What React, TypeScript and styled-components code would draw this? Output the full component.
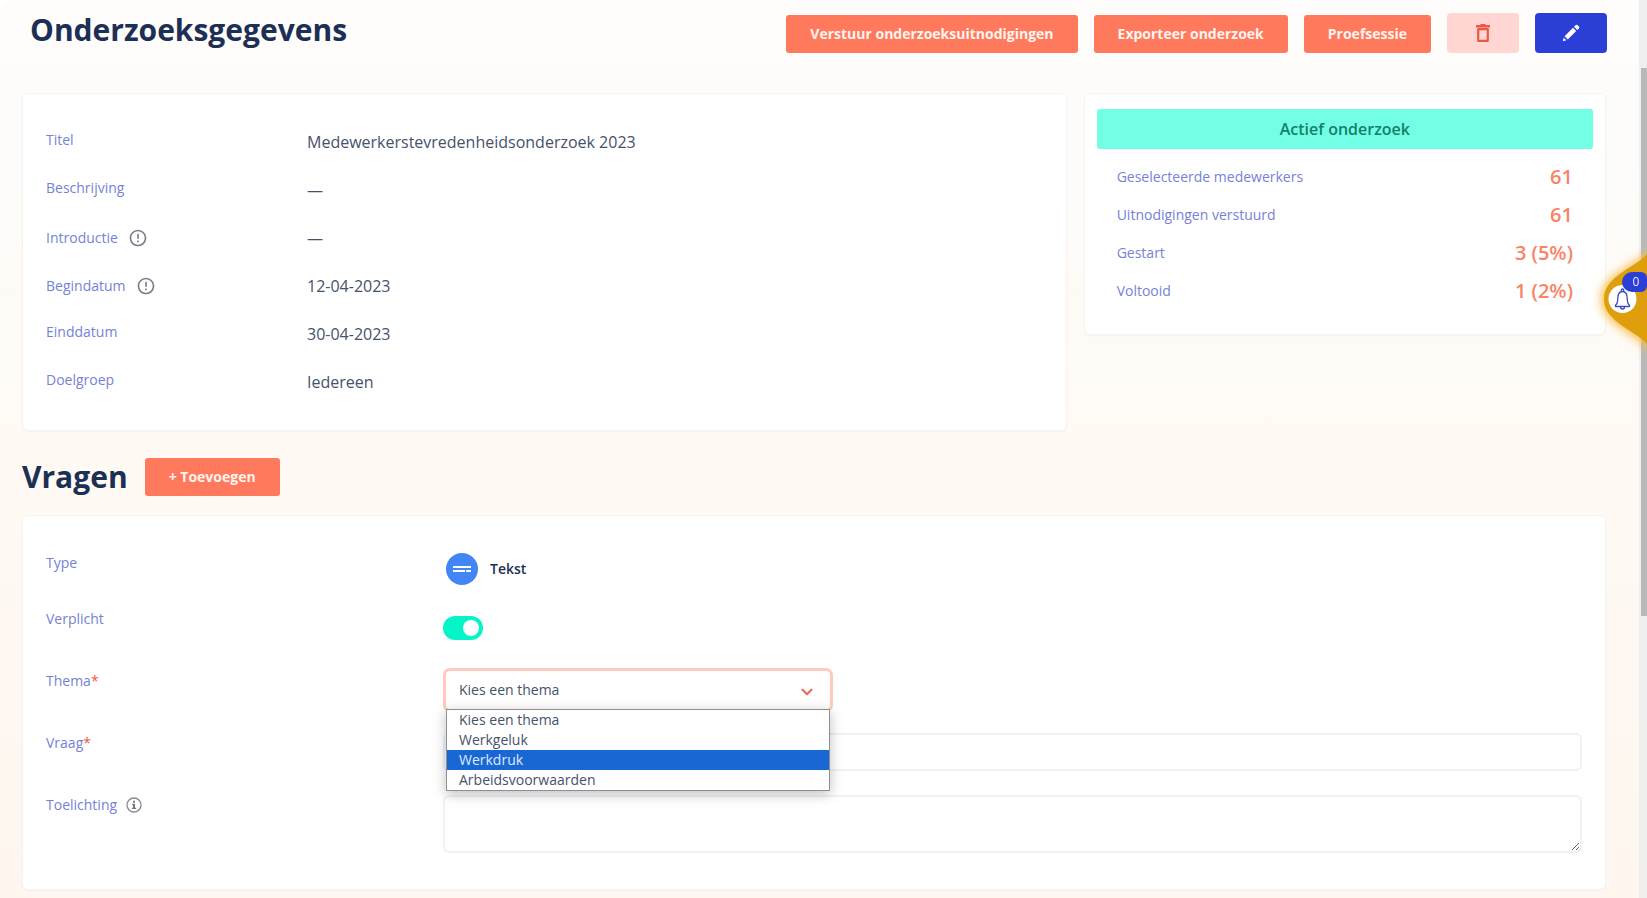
import React, { useState } from 'react';
import styled, { createGlobalStyle } from 'styled-components';
import { RiErrorWarningLine } from 'react-icons/ri';
import { ChevronDown } from 'lucide-react';

const color = {
  heading: '#1c2f54',
  text: '#46526c',
  label: '#7682d6',
  coral: '#ff7a5c',
  figure: '#fa8468',
  blue: '#2b3fd6',
  line: '#eff2f4',
};

const GlobalStyle = createGlobalStyle`
  *, *::before, *::after { box-sizing: border-box; }
  body {
    margin: 0;
    background: #fff;
    color: ${color.text};
    font-family: 'Open Sans', 'Noto Sans', sans-serif;
    font-size: 14px;
    line-height: 20px;
  }
  h1, h2, dl, dd, dt, p, ul { margin: 0; padding: 0; }
  button, input, select, textarea { font: inherit; color: inherit; }
`;

const Page = styled.div`
  min-height: 100vh;
  padding-right: 8px;
  border-top-left-radius: 14px;
  background: linear-gradient(#fdfcfb 0, #fdfcfb 90px, #fffaf4 50%, #fef6ef 100%);
`;

const Header = styled.header`
  display: flex;
  align-items: flex-end;
  justify-content: space-between;
  gap: 16px;
  height: 64px;
  padding: 0 32px 11px 30px;
  border-top-left-radius: 14px;
  background: #fefdfc;
`;

const Heading = styled.h1`
  color: ${color.heading};
  font-size: 30px;
  font-weight: 700;
  line-height: 46px;
`;

const Actions = styled.div`
  display: flex;
  align-items: flex-end;
  gap: 16px;
`;

const Button = styled.button`
  height: 38px;
  padding: 0 24px;
  border: 0;
  border-radius: 3px;
  background: ${color.coral};
  color: #fff3ef;
  font-size: 14px;
  font-weight: 700;
  white-space: nowrap;
  cursor: pointer;
`;

const IconButton = styled.button<{ $danger?: boolean }>`
  display: grid;
  place-items: center;
  width: 72px;
  height: 40px;
  padding: 0;
  border: 0;
  border-radius: 4px;
  background: ${p => (p.$danger ? '#ffd6d1' : color.blue)};
  color: ${p => (p.$danger ? '#ee5744' : '#fff')};
  cursor: pointer;
`;

const Main = styled.main`
  padding: 29px 33px 8px 22px;
`;

const Overview = styled.div`
  display: grid;
  grid-template-columns: 2fr 1fr;
  align-items: start;
  gap: 17px;
`;

const Card = styled.section`
  border: 1px solid #f6f4f3;
  border-radius: 6px;
  background: #fff;
  box-shadow: 0 1px 2px rgba(40, 50, 80, 0.04);
`;

const DetailCard = styled(Card)`
  padding: 36px 23px;
`;

const DetailRow = styled.div`
  display: grid;
  grid-template-columns: 261px 1fr;
  min-height: 24px;
  & + & { margin-top: 24px; }
  dd { font-size: 16px; line-height: 24px; }
`;

const Term = styled.dt`
  display: flex;
  align-items: center;
  align-self: start;
  gap: 10px;
  color: ${color.label};
`;

const TermIcon = styled(RiErrorWarningLine)`
  display: block;
  width: 20px;
  height: 24px;
  color: #7b7f89;
`;

const StatusCard = styled(Card)`
  padding: 15px 12px;
`;

const Status = styled.p`
  border-radius: 3px;
  background: #72ffe5;
  color: #14806c;
  font-size: 16px;
  font-weight: 600;
  line-height: 40px;
  text-align: center;
`;

const Stats = styled.dl`
  padding: 9px 20px;
`;

const Stat = styled.div`
  display: flex;
  justify-content: space-between;
  line-height: 38px;
  dt { color: ${color.label}; }
  dd { color: ${color.figure}; font-size: 20px; font-weight: 600; }
`;

const SectionHead = styled.div`
  display: flex;
  align-items: center;
  gap: 17px;
  margin: 23px 0 15px;
`;

const FormCard = styled(Card)`
  padding: 37px 23px 36px;
`;

const FormRow = styled.div`
  display: grid;
  grid-template-columns: 397px 1fr;
  align-items: start;
  & + & { margin-top: 24px; }
`;

const Label = styled.label`
  display: flex;
  align-items: center;
  color: ${color.label};
`;

const Required = styled.span`
  color: #f4563c;
`;

const TypeValue = styled.div`
  display: flex;
  align-items: center;
  gap: 12px;
  padding-left: 3px;
  color: ${color.heading};
  font-weight: 600;
`;

const ToggleArea = styled.div`
  display: flex;
  align-items: center;
  height: 38px;
`;

const Toggle = styled.input`
  appearance: none;
  display: flex;
  align-items: center;
  width: 40px;
  height: 24px;
  margin: 0;
  padding: 0 4px;
  border-radius: 12px;
  background: #d5d9e0;
  cursor: pointer;
  &::before {
    content: '';
    width: 16px;
    height: 16px;
    border-radius: 50%;
    background: #fff;
  }
  &:checked {
    justify-content: flex-end;
    background: #05f5c8;
  }
`;

const SelectArea = styled.div`
  position: relative;
  width: 384px;
  margin-left: 3px;
`;

const Select = styled.select`
  appearance: none;
  display: block;
  width: 100%;
  height: 38px;
  padding: 0 13px;
  border: 0;
  border-radius: 4px;
  outline: 0;
  background: #fff;
  box-shadow: 0 0 0 3px #ffcabd;
`;

const Chevron = styled(ChevronDown)`
  position: absolute;
  top: 12px;
  right: 14px;
  width: 18px;
  height: 18px;
  color: #ef6a5e;
  stroke-width: 3;
  pointer-events: none;
`;

const Options = styled.ul`
  position: absolute;
  top: 100%;
  left: 0;
  right: 0;
  z-index: 1;
  border: 1px solid #8f8f8f;
  background: #fff;
  box-shadow: 0 3px 12px rgba(0, 0, 0, 0.25);
  list-style: none;
`;

const Option = styled.li<{ $active: boolean }>`
  padding: 0 12px;
  background: ${p => (p.$active ? '#1967d2' : '#fff')};
  color: ${p => (p.$active ? '#dfeaff' : color.text)};
  cursor: default;
`;

const TextInput = styled.input`
  width: 100%;
  height: 38px;
  padding: 0 12px;
  border: 2px solid ${color.line};
  border-radius: 6px;
  background: #fff;
`;

const TextArea = styled.textarea`
  display: block;
  width: 100%;
  height: 58px;
  padding: 8px 12px;
  border: 2px solid ${color.line};
  border-radius: 6px;
  background: #fff;
  resize: vertical;
`;

const Track = styled.div`
  position: fixed;
  top: 0;
  right: 0;
  bottom: 0;
  width: 8px;
  padding: 68px 0 0 2px;
  background: #efefef;
`;

const Thumb = styled.div`
  height: 66%;
  background: #b9b9b9;
`;

const Notifications = styled.button`
  position: fixed;
  top: 240px;
  right: 0;
  width: 60px;
  height: 120px;
  padding: 0;
  border: 0;
  background: none;
  cursor: pointer;
  svg { display: block; overflow: visible; }
`;

const Count = styled.span`
  position: absolute;
  top: 32px;
  right: 0;
  width: 25px;
  padding-left: 3px;
  border-radius: 10px 6px 6px 10px;
  background: ${color.blue};
  color: #e9ecff;
  font-size: 12px;
  line-height: 20px;
  text-align: center;
`;

const InfoMark = styled.svg`
  width: 16px;
  height: 16px;
  margin-left: 9px;
`;

const InfoIcon = () => (
  <InfoMark viewBox="0 0 16 16" aria-hidden="true">
    <circle cx="8" cy="8" r="7" fill="none" stroke="#85888f" strokeWidth="1.300" />
    <path d="M7 3.800h2v2H7zM6.200 6.800H9v4h1V12H6v-1.200h1V8h-.8z" fill="#74777f" />
  </InfoMark>
);

const TrashIcon = () => (
  <svg width="14" height="18" viewBox="0 0 14 18" aria-hidden="true">
    <path d="M0 1h4l1-1h4l1 1h4v2.400H0z" fill="currentColor" />
    <path d="M2.200 5.200h9.600v11.600H2.200z" fill="none" stroke="currentColor" strokeWidth="2.200" strokeLinejoin="round" />
  </svg>
);

const PencilIcon = () => (
  <svg width="18" height="18" viewBox="0 0 18 18" fill="currentColor" aria-hidden="true">
    <path d="M.8 17.200l.9-3.500 2.600 2.600z" />
    <path d="M2.600 12.200l8.400-8.400 3.200 3.200-8.400 8.400z" />
    <path d="M12 2.800L13.800 1q.8-.7 1.600 0L17 2.600q.7.8 0 1.600L15.200 6z" />
  </svg>
);

const TextTypeIcon = () => (
  <svg width="32" height="32" viewBox="0 0 32 32" aria-hidden="true">
    <circle cx="16" cy="16" r="16" fill="#4285f4" />
    <path d="M7 13h18v2H7zM7 17h12v2H7zM20.200 17H25v2h-4.800z" fill="#fff" />
  </svg>
);

const BellDrop = () => (
  <svg width="60" height="120" viewBox="0 0 60 120" aria-hidden="true">
    <defs>
      <filter id="glow" x="-60%" y="-40%" width="220%" height="180%">
        <feGaussianBlur stdDeviation="5" />
      </filter>
    </defs>
    <path d="M64 8C48 28 14 34 14 59s34 33 50 53z" fill="#f7bd4a" filter="url(#glow)" />
    <path d="M60 14C48 28 17 36 17 59s31 31 43 45z" fill="#df9f0d" />
    <circle cx="35.500" cy="59" r="14" fill="#fff" />
    <g fill="none" stroke="#3a4cc0" strokeWidth="1.300" strokeLinejoin="round">
      <path d="M28.500 66.500v-1.200c1.600-1.200 2.200-3 2.200-6.300 0-4.600 1.600-7.500 4.800-7.500s4.800 2.900 4.800 7.500c0 3.300.6 5.100 2.200 6.300v1.200z" />
      <path d="M34.300 51.500v-1.300a1.200 1.200 0 0 1 2.400 0v1.300" />
      <path d="M33.500 67a2 2 0 0 0 4 0" />
    </g>
  </svg>
);

const details = [
  { term: 'Titel', value: 'Medewerkerstevredenheidsonderzoek 2023' },
  { term: 'Beschrijving', value: '—' },
  { term: 'Introductie', value: '—', hint: true },
  { term: 'Begindatum', value: '12-04-2023', hint: true },
  { term: 'Einddatum', value: '30-04-2023' },
  { term: 'Doelgroep', value: 'Iedereen' },
];

const stats = [
  ['Geselecteerde medewerkers', '61'],
  ['Uitnodigingen verstuurd', '61'],
  ['Gestart', '3 (5%)'],
  ['Voltooid', '1 (2%)'],
];

const themes = ['Kies een thema', 'Werkgeluk', 'Werkdruk', 'Arbeidsvoorwaarden'];

export default function App() {
  const [required, setRequired] = useState(true);
  const [theme, setTheme] = useState(themes[0]);
  const [active, setActive] = useState('Werkdruk');

  return (
    <>
      <GlobalStyle />
      <Page>
        <Header>
          <Heading>Onderzoeksgegevens</Heading>
          <Actions>
            <Button>Verstuur onderzoeksuitnodigingen</Button>
            <Button>Exporteer onderzoek</Button>
            <Button>Proefsessie</Button>
            <IconButton $danger aria-label="Verwijderen"><TrashIcon /></IconButton>
            <IconButton aria-label="Bewerken"><PencilIcon /></IconButton>
          </Actions>
        </Header>
        <Main>
          <Overview>
            <DetailCard>
              <dl>
                {details.map(d => (
                  <DetailRow key={d.term}>
                    <Term>{d.term}{d.hint && <TermIcon />}</Term>
                    <dd>{d.value}</dd>
                  </DetailRow>
                ))}
              </dl>
            </DetailCard>
            <StatusCard>
              <Status>Actief onderzoek</Status>
              <Stats>
                {stats.map(([name, value]) => (
                  <Stat key={name}><dt>{name}</dt><dd>{value}</dd></Stat>
                ))}
              </Stats>
            </StatusCard>
          </Overview>
          <SectionHead>
            <Heading as="h2">Vragen</Heading>
            <Button>+ Toevoegen</Button>
          </SectionHead>
          <FormCard>
            <FormRow>
              <Label as="span">Type</Label>
              <TypeValue><TextTypeIcon />Tekst</TypeValue>
            </FormRow>
            <FormRow>
              <Label htmlFor="required">Verplicht</Label>
              <ToggleArea>
                <Toggle id="required" type="checkbox" checked={required} onChange={e => setRequired(e.target.checked)} />
              </ToggleArea>
            </FormRow>
            <FormRow>
              <Label htmlFor="theme">Thema<Required>*</Required></Label>
              <SelectArea>
                <Select id="theme" value={theme} onChange={e => setTheme(e.target.value)}>
                  {themes.map(t => <option key={t}>{t}</option>)}
                </Select>
                <Chevron />
                <Options>
                  {themes.map(t => (
                    <Option key={t} $active={t === active} onMouseEnter={() => setActive(t)} onClick={() => setTheme(t)}>{t}</Option>
                  ))}
                </Options>
              </SelectArea>
            </FormRow>
            <FormRow>
              <Label htmlFor="question">Vraag<Required>*</Required></Label>
              <TextInput id="question" type="text" />
            </FormRow>
            <FormRow>
              <Label htmlFor="note">Toelichting<InfoIcon /></Label>
              <TextArea id="note" />
            </FormRow>
          </FormCard>
        </Main>
      </Page>
      <Track><Thumb /></Track>
      <Notifications aria-label="Meldingen">
        <BellDrop />
        <Count>0</Count>
      </Notifications>
    </>
  );
}
